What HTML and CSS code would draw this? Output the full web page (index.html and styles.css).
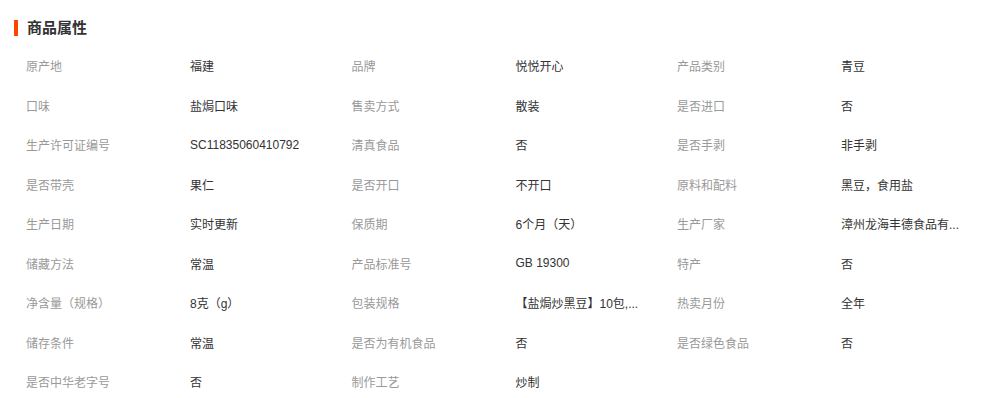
FILE: index.html
```html
<!DOCTYPE html>
<html lang="zh">
<head>
<meta charset="utf-8">
<link rel="stylesheet" href="styles.css">
</head>
<body>
<div class="panel">
  <h2 class="title">商品属性</h2>
  <div class="attrs">
    <div class="k">原产地</div><div class="v">福建</div>
    <div class="k">品牌</div><div class="v">悦悦开心</div>
    <div class="k">产品类别</div><div class="v">青豆</div>

    <div class="k">口味</div><div class="v">盐焗口味</div>
    <div class="k">售卖方式</div><div class="v">散装</div>
    <div class="k">是否进口</div><div class="v">否</div>

    <div class="k">生产许可证编号</div><div class="v">SC11835060410792</div>
    <div class="k">清真食品</div><div class="v">否</div>
    <div class="k">是否手剥</div><div class="v">非手剥</div>

    <div class="k">是否带壳</div><div class="v">果仁</div>
    <div class="k">是否开口</div><div class="v">不开口</div>
    <div class="k">原料和配料</div><div class="v">黑豆，食用盐</div>

    <div class="k">生产日期</div><div class="v">实时更新</div>
    <div class="k">保质期</div><div class="v">6个月（天）</div>
    <div class="k">生产厂家</div><div class="v">漳州龙海丰德食品有...</div>

    <div class="k">储藏方法</div><div class="v">常温</div>
    <div class="k">产品标准号</div><div class="v">GB 19300</div>
    <div class="k">特产</div><div class="v">否</div>

    <div class="k">净含量（规格）</div><div class="v">8克（g）</div>
    <div class="k">包装规格</div><div class="v">【盐焗炒黑豆】10包,...</div>
    <div class="k">热卖月份</div><div class="v">全年</div>

    <div class="k">储存条件</div><div class="v">常温</div>
    <div class="k">是否为有机食品</div><div class="v">否</div>
    <div class="k">是否绿色食品</div><div class="v">否</div>

    <div class="k">是否中华老字号</div><div class="v">否</div>
    <div class="k">制作工艺</div><div class="v">炒制</div>
  </div>
</div>
</body>
</html>
```

FILE: styles.css
```css
html, body {
  margin: 0;
  padding: 0;
  background: #fff;
}
body {
  font-family: "Liberation Sans", Arial, "Noto Sans CJK SC", sans-serif;
  font-size: 12px;
  color: #333;
}
.panel {
  padding: 20px 0 0 14px;
}
.title {
  margin: 0;
  padding-left: 9px;
  border-left: 4px solid #ff4400;
  font-size: 15px;
  line-height: 16px;
  font-weight: bold;
  color: #333;
}
.attrs {
  margin-top: 10px;
  padding-left: 12px;
  display: grid;
  grid-template-columns: 164px 161.5px 164px 161.5px 164px 161.5px;
  grid-auto-rows: 39.5px;
  align-items: center;
}
.k {
  color: #999;
  white-space: nowrap;
}
.v {
  color: #333;
  white-space: nowrap;
}
```
